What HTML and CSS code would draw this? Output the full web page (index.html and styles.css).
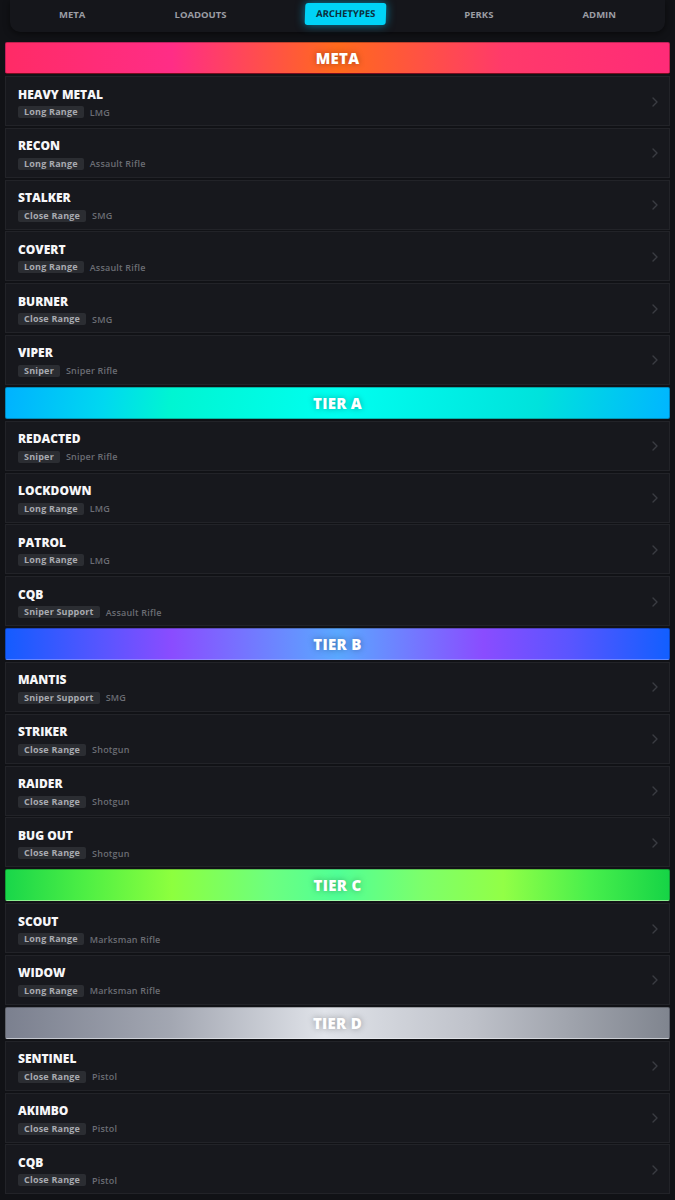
FILE: index.html
```html
<!DOCTYPE html>
<html lang="en">
<head>
  <meta charset="UTF-8">
  <title>Archetypes</title>
  <link rel="stylesheet" href="styles.css">
</head>
<body>

<nav class="topnav">
  <a class="nav-item">Meta</a>
  <a class="nav-item">Loadouts</a>
  <a class="nav-item active">Archetypes</a>
  <a class="nav-item">Perks</a>
  <a class="nav-item">Admin</a>
</nav>

<main class="tiers" id="tiers"></main>

<script>
  const tiers = [
    { name: 'Meta', cls: 'tier-meta', items: [
      ['Heavy Metal', 'Long Range', 'LMG'],
      ['Recon', 'Long Range', 'Assault Rifle'],
      ['Stalker', 'Close Range', 'SMG'],
      ['Covert', 'Long Range', 'Assault Rifle'],
      ['Burner', 'Close Range', 'SMG'],
      ['Viper', 'Sniper', 'Sniper Rifle']
    ]},
    { name: 'Tier A', cls: 'tier-a', items: [
      ['Redacted', 'Sniper', 'Sniper Rifle'],
      ['Lockdown', 'Long Range', 'LMG'],
      ['Patrol', 'Long Range', 'LMG'],
      ['CQB', 'Sniper Support', 'Assault Rifle']
    ]},
    { name: 'Tier B', cls: 'tier-b', items: [
      ['Mantis', 'Sniper Support', 'SMG'],
      ['Striker', 'Close Range', 'Shotgun'],
      ['Raider', 'Close Range', 'Shotgun'],
      ['Bug Out', 'Close Range', 'Shotgun']
    ]},
    { name: 'Tier C', cls: 'tier-c', items: [
      ['Scout', 'Long Range', 'Marksman Rifle'],
      ['Widow', 'Long Range', 'Marksman Rifle']
    ]},
    { name: 'Tier D', cls: 'tier-d', items: [
      ['Sentinel', 'Close Range', 'Pistol'],
      ['Akimbo', 'Close Range', 'Pistol'],
      ['CQB', 'Close Range', 'Pistol']
    ]}
  ];

  const chevron = '<svg class="chevron" width="6" height="10" viewBox="0 0 6 10"><path d="M1 1 L5 5 L1 9" fill="none" stroke="currentColor" stroke-width="1.4" stroke-linecap="round" stroke-linejoin="round"/></svg>';

  const root = document.getElementById('tiers');

  tiers.forEach(tier => {
    const section = document.createElement('section');
    section.className = 'tier';

    let html = `<h2 class="tier-header ${tier.cls}">${tier.name}</h2>`;
    tier.items.forEach(item => {
      html += `
        <div class="archetype">
          <div class="archetype-info">
            <h3>${item[0]}</h3>
            <div class="meta-line">
              <span class="tag">${item[1]}</span>
              <span class="weapon">${item[2]}</span>
            </div>
          </div>
          ${chevron}
        </div>`;
    });

    section.innerHTML = html;
    root.appendChild(section);
  });
</script>

</body>
</html>
```

FILE: styles.css
```css
body {
  font-family: "Open Sans", "Noto Sans", sans-serif;
  background-color: #111216;
  margin: 0;
  padding: 0;
  color: #fff;
}

.topnav {
  display: flex;
  justify-content: space-between;
  align-items: center;
  height: 30px;
  margin: 0 10px;
  padding: 0 38px 2px;
  background-color: #15161b;
  border-radius: 0 0 10px 10px;
  box-shadow: 0 2px 6px rgba(0, 0, 0, 0.5);
}

.nav-item {
  padding: 5px 11px;
  font-size: 9.5px;
  font-weight: 700;
  text-transform: uppercase;
  color: #9b9da4;
  cursor: pointer;
  line-height: 12px;
}

.nav-item.active {
  background-color: #00d3f7;
  color: #0b2f3c;
  border-radius: 3px;
  transform: skewX(-2deg);
  box-shadow: 0 0 10px rgba(0, 200, 255, 0.6);
  margin-top: -2px;
}

.tiers {
  padding: 10px 5px 0;
}

.tier {
  margin-bottom: 0.5px;
}

.tier-header {
  margin: 0 0 2px;
  height: 32px;
  line-height: 31px;
  text-align: center;
  font-size: 15px;
  font-weight: 800;
  text-transform: uppercase;
  letter-spacing: 0.3px;
  color: #fff;
  border-radius: 2px;
  text-shadow: 0 0 6px rgba(0, 0, 0, 0.35);
  box-sizing: border-box;
  border: 1px solid rgba(0, 0, 0, 0.25);
}

.tier-meta {
  background: linear-gradient(90deg, #ff2b66, #ff2d86 25%, #ff6a1c 50%, #ff3a6a 75%, #ff2b78);
  border-bottom-color: #7a0d20;
}

.tier-a {
  background: linear-gradient(100deg, #00b2ff, #00d8f0 15%, #00f5d2 25%, #00fff0 50%, #00e2dc 80%, #00b6ff);
}

.tier-b {
  background: linear-gradient(90deg, #145cff, #5a55ff 15%, #8a4cff 25%, #5aa8ff 50%, #8a4cff 72%, #5a55ff 85%, #125fff);
  border-bottom-color: rgba(170, 180, 255, 0.5);
}

.tier-c {
  background: linear-gradient(90deg, #19d64a, #4eef44 12%, #8dff3e 25%, #6cff80 40%, #50ff96 50%, #7dff6a 63%, #92ff46 75%, #48ef4c 88%, #16d446);
  border-bottom-color: rgba(210, 255, 190, 0.6);
}

.tier-d {
  background: linear-gradient(90deg, #7b808f, #a3a7b2 25%, #e0e3e9 48%, #bfc2ca 70%, #80858f);
  border-bottom-color: rgba(240, 242, 246, 0.6);
}

.archetype {
  display: flex;
  align-items: center;
  justify-content: space-between;
  height: 50px;
  margin-bottom: 1.8px;
  padding: 3px 11px 0 12px;
  box-sizing: border-box;
  background-color: #17181d;
  border: 1px solid #222328;
}

.archetype-info h3 {
  margin: 0 0 4px;
  font-size: 12px;
  line-height: 15px;
  font-weight: 800;
  text-transform: uppercase;
  color: #f6f6f8;
}

.meta-line {
  display: flex;
  align-items: center;
  gap: 6px;
}

.tag {
  display: inline-block;
  height: 12px;
  line-height: 12px;
  padding: 0 6px;
  font-size: 9px;
  font-weight: 700;
  color: #a8aab0;
  background-color: #2b2d32;
  border-radius: 2px;
  letter-spacing: 0.2px;
}

.weapon {
  font-size: 9px;
  font-weight: 600;
  color: #6b6d74;
  letter-spacing: 0.2px;
}

.chevron {
  color: #3a3c42;
  margin-top: -2px;
}
```
